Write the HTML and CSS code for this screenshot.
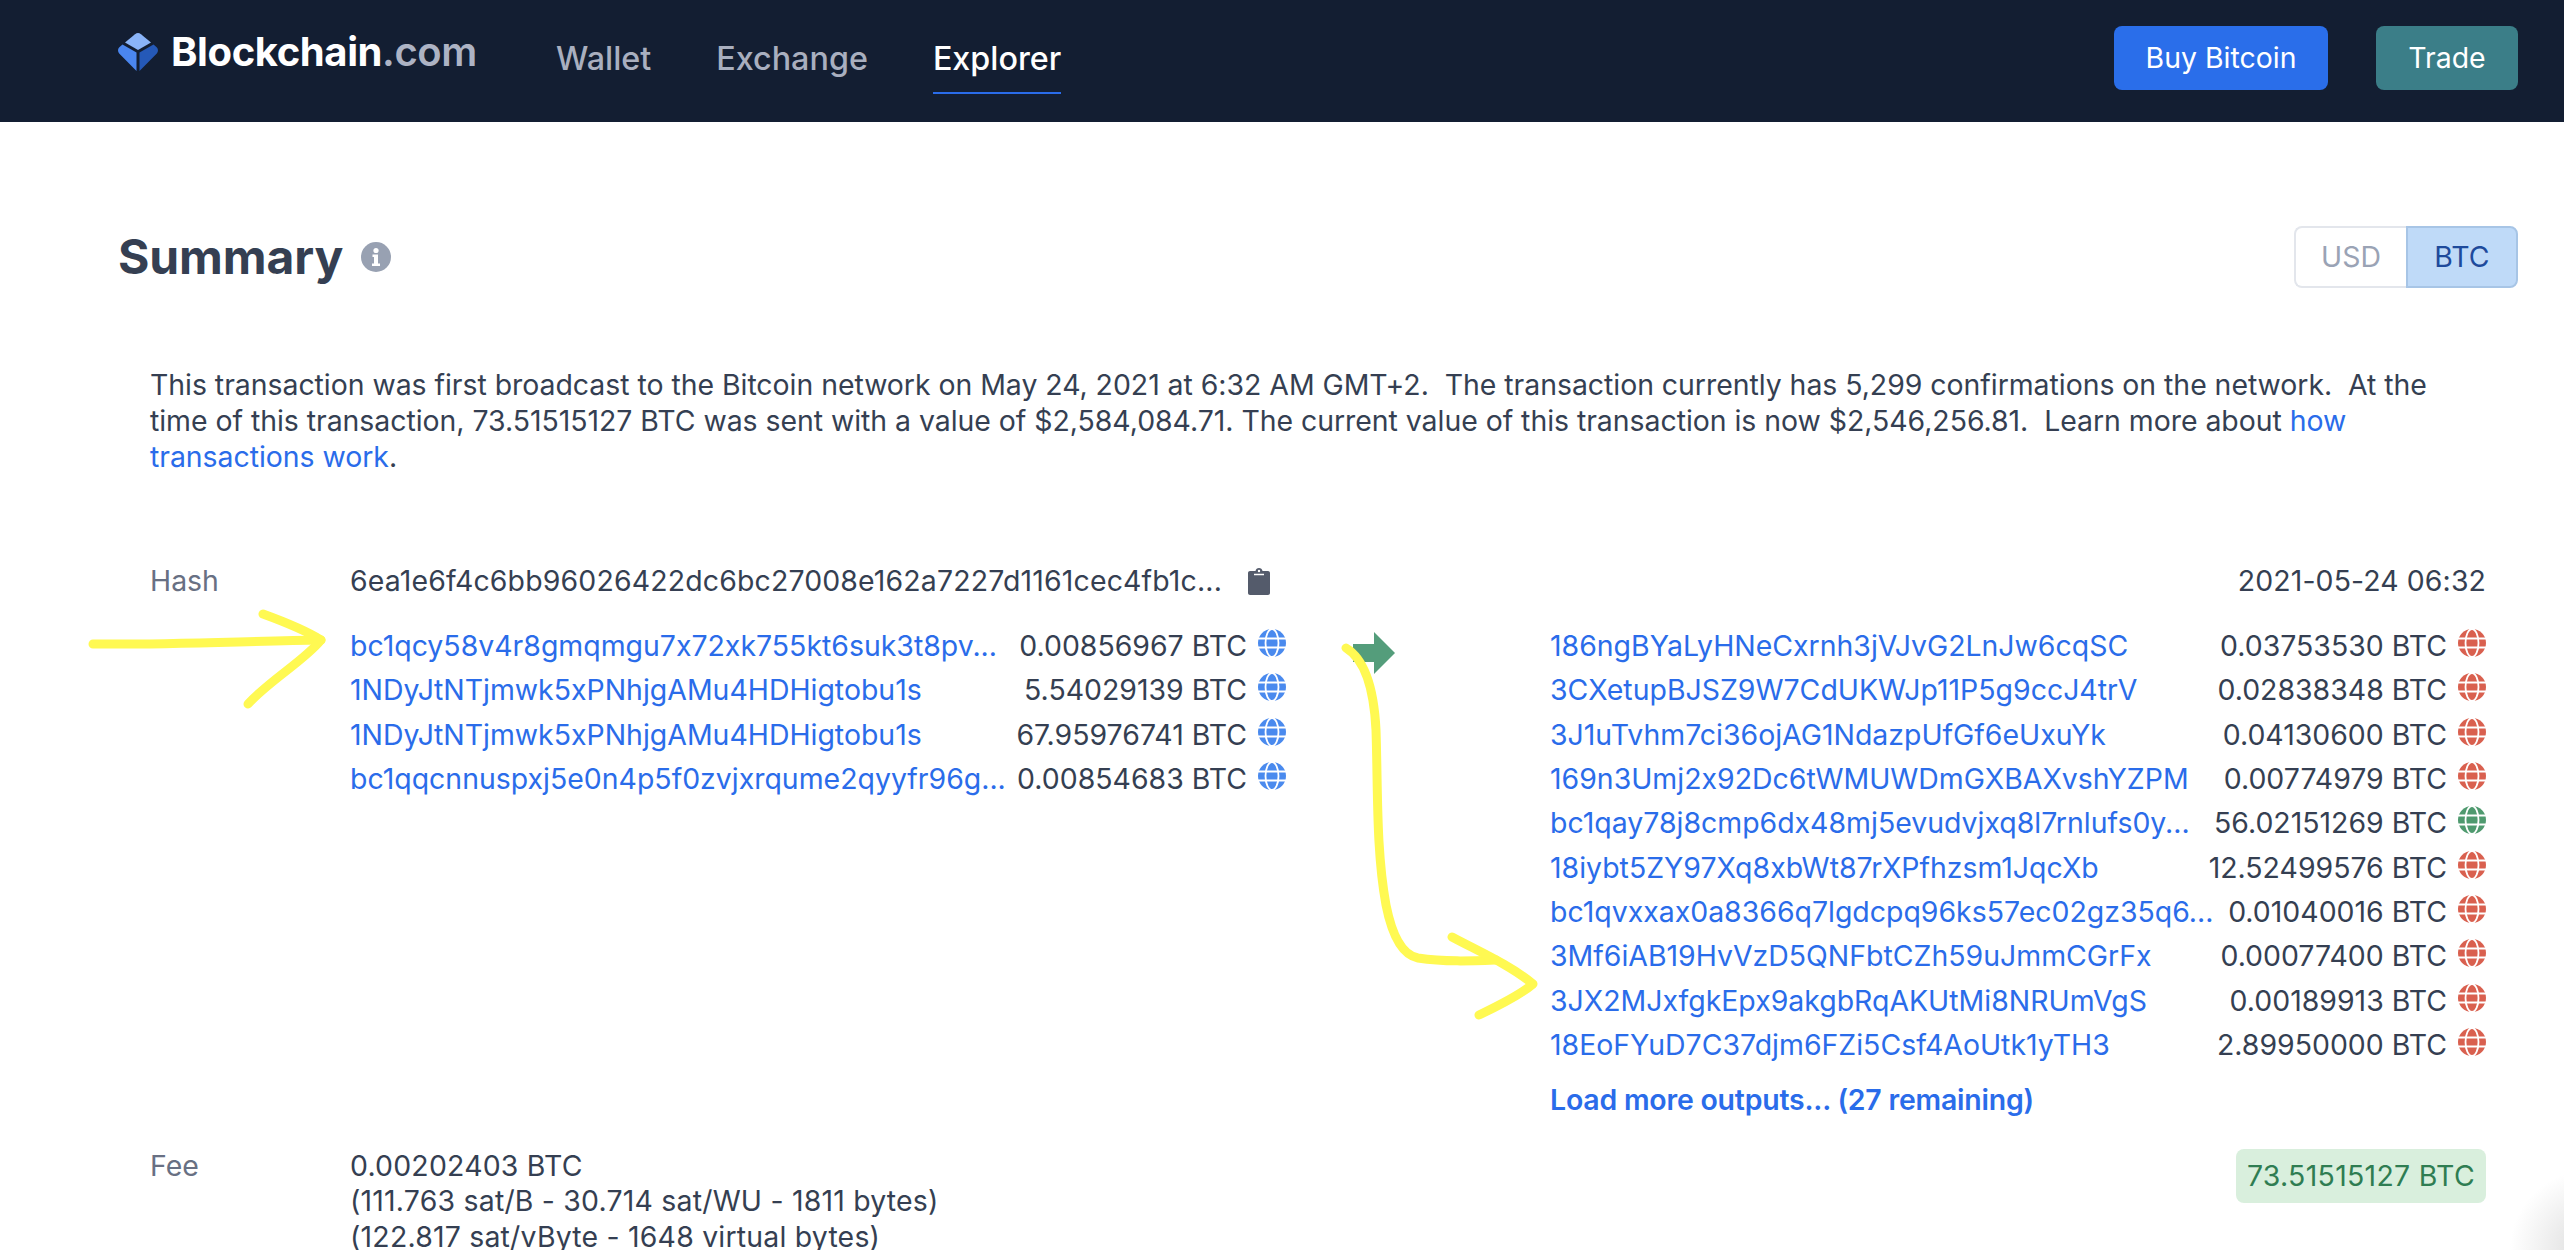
FILE: index.html
```html
<!DOCTYPE html>
<html lang="en">
<head>
    <meta charset="UTF-8">
    <meta name="viewport" content="width=device-width, initial-scale=1.0">
    <title>Blockchain.com Explorer</title>
    <link rel="stylesheet" href="styles.css">
</head>
<body>

    <svg class="defs" width="0" height="0">
        <symbol id="globe" viewBox="0 0 28 28">
            <circle cx="14" cy="14" r="14" fill="currentColor"/>
            <g fill="none" stroke="#fff" stroke-width="1.8">
                <ellipse cx="14" cy="14" rx="6.5" ry="14"/>
                <path d="M0 9.500h28M0 18.500h28"/>
            </g>
        </symbol>
    </svg>

    <header class="topbar">
        <a class="logo" href="#">
            <svg class="logo-mark" viewBox="0 0 40 38" width="40" height="38">
                <path d="M20 0c1 0 2 .4 3 1.2l10 8.4L20 17 7 9.6 17 1.2C18 .4 19 0 20 0z" fill="#8ab4f8"/>
                <path d="M4.500 11.500 18.500 19.500V38L1.200 20.500C-.6 18.600-.2 15.500 1.600 14z" fill="#4a86ef"/>
                <path d="M35.500 11.500 21.500 19.500V38L38.800 20.500C40.600 18.600 40.200 15.500 38.400 14z" fill="#2559b8"/>
            </svg>
            <span class="logo-text">Blockchain<span class="logo-tld">.com</span></span>
        </a>
        <nav class="nav">
            <a href="#">Wallet</a>
            <a href="#">Exchange</a>
            <a href="#" class="active">Explorer</a>
        </nav>
        <div class="topbar-actions">
            <a class="btn btn-buy" href="#">Buy Bitcoin</a>
            <a class="btn btn-trade" href="#">Trade</a>
        </div>
    </header>

    <main class="content">
        <div class="summary-head">
            <h1>Summary</h1>
            <svg class="info" viewBox="0 0 30 30" width="30" height="30">
                <circle cx="15" cy="15" r="15" fill="#98a1b2"/>
                <circle cx="15" cy="8.500" r="2.600" fill="#fff"/>
                <path d="M11.500 12.500h5.500v9h2v2.500h-8v-2.500h2v-6.500h-1.500z" fill="#fff"/>
            </svg>
            <div class="toggle">
                <span class="toggle-off">USD</span>
                <span class="toggle-on">BTC</span>
            </div>
        </div>

        <p class="intro">This transaction was first broadcast to the Bitcoin network on May 24, 2021 at 6:32 AM GMT+2.&nbsp; The transaction currently has 5,299 confirmations on the network.&nbsp; At the time of this transaction, 73.51515127 BTC was sent with a value of $2,584,084.71. The current value of this transaction is now $2,546,256.81.&nbsp; Learn more about <a href="#">how transactions work</a>.</p>

        <div class="tx">
            <div class="tx-hash">
                <span class="tx-label">Hash</span>
                <span class="hash-value">6ea1e6f4c6bb96026422dc6bc27008e162a7227d1161cec4fb1c...</span>
                <svg class="clip" viewBox="0 0 22 27" width="22" height="27">
                    <path d="M2 3h5.500C7.800 1.300 9.200 0 11 0s3.200 1.300 3.500 3H20c1.100 0 2 .9 2 2v20c0 1.100-.9 2-2 2H2c-1.100 0-2-.9-2-2V5c0-1.100.9-2 2-2z" fill="#545b6b"/>
                    <path d="M6 6.500h10" stroke="#fff" stroke-width="1.500"/>
                    <circle cx="11" cy="3" r="1.200" fill="#fff"/>
                </svg>
                <span class="tx-date">2021-05-24 06:32</span>
            </div>

            <div class="tx-flow">
                <div class="inputs">
                    <div class="io-row"><a class="addr" href="#">bc1qcy58v4r8gmqmgu7x72xk755kt6suk3t8pv...</a><span class="amount">0.00856967 BTC</span><svg class="globe spent-in"><use href="#globe"/></svg></div>
                    <div class="io-row"><a class="addr" href="#">1NDyJtNTjmwk5xPNhjgAMu4HDHigtobu1s</a><span class="amount">5.54029139 BTC</span><svg class="globe spent-in"><use href="#globe"/></svg></div>
                    <div class="io-row"><a class="addr" href="#">1NDyJtNTjmwk5xPNhjgAMu4HDHigtobu1s</a><span class="amount">67.95976741 BTC</span><svg class="globe spent-in"><use href="#globe"/></svg></div>
                    <div class="io-row"><a class="addr" href="#">bc1qqcnnuspxj5e0n4p5f0zvjxrqume2qyyfr96g...</a><span class="amount">0.00854683 BTC</span><svg class="globe spent-in"><use href="#globe"/></svg></div>
                </div>

                <svg class="flow-arrow" viewBox="0 0 42 42" width="42" height="42">
                    <path d="M0 12h21V0l21 21-21 21V30H0z" fill="#549d7b"/>
                </svg>

                <div class="outputs">
                    <div class="io-row"><a class="addr" href="#">186ngBYaLyHNeCxrnh3jVJvG2LnJw6cqSC</a><span class="amount">0.03753530 BTC</span><svg class="globe spent"><use href="#globe"/></svg></div>
                    <div class="io-row"><a class="addr" href="#">3CXetupBJSZ9W7CdUKWJp11P5g9ccJ4trV</a><span class="amount">0.02838348 BTC</span><svg class="globe spent"><use href="#globe"/></svg></div>
                    <div class="io-row"><a class="addr" href="#">3J1uTvhm7ci36ojAG1NdazpUfGf6eUxuYk</a><span class="amount">0.04130600 BTC</span><svg class="globe spent"><use href="#globe"/></svg></div>
                    <div class="io-row"><a class="addr" href="#">169n3Umj2x92Dc6tWMUWDmGXBAXvshYZPM</a><span class="amount">0.00774979 BTC</span><svg class="globe spent"><use href="#globe"/></svg></div>
                    <div class="io-row"><a class="addr" href="#">bc1qay78j8cmp6dx48mj5evudvjxq8l7rnlufs0y...</a><span class="amount">56.02151269 BTC</span><svg class="globe unspent"><use href="#globe"/></svg></div>
                    <div class="io-row"><a class="addr" href="#">18iybt5ZY97Xq8xbWt87rXPfhzsm1JqcXb</a><span class="amount">12.52499576 BTC</span><svg class="globe spent"><use href="#globe"/></svg></div>
                    <div class="io-row"><a class="addr" href="#">bc1qvxxax0a8366q7lgdcpq96ks57ec02gz35q6...</a><span class="amount">0.01040016 BTC</span><svg class="globe spent"><use href="#globe"/></svg></div>
                    <div class="io-row"><a class="addr" href="#">3Mf6iAB19HvVzD5QNFbtCZh59uJmmCGrFx</a><span class="amount">0.00077400 BTC</span><svg class="globe spent"><use href="#globe"/></svg></div>
                    <div class="io-row"><a class="addr" href="#">3JX2MJxfgkEpx9akgbRqAKUtMi8NRUmVgS</a><span class="amount">0.00189913 BTC</span><svg class="globe spent"><use href="#globe"/></svg></div>
                    <div class="io-row"><a class="addr" href="#">18EoFYuD7C37djm6FZi5Csf4AoUtk1yTH3</a><span class="amount">2.89950000 BTC</span><svg class="globe spent"><use href="#globe"/></svg></div>
                    <a class="load-more" href="#">Load more outputs... (27 remaining)</a>
                </div>
            </div>

            <div class="tx-fee">
                <span class="tx-label">Fee</span>
                <div class="fee-value">
                    0.00202403 BTC<br>
                    (111.763 sat/B - 30.714 sat/WU - 1811 bytes)<br>
                    (122.817 sat/vByte - 1648 virtual bytes)
                </div>
                <span class="total">73.51515127 BTC</span>
            </div>
        </div>
    </main>

    <!-- hand drawn marks on top of the screenshot -->
    <svg class="marks" viewBox="0 0 2564 1250" width="2564" height="1250">
        <defs>
            <radialGradient id="corner" gradientUnits="userSpaceOnUse" cx="2590" cy="1250" r="80">
                <stop offset="0" stop-color="#dcdcdc"/>
                <stop offset="1" stop-color="#dcdcdc" stop-opacity="0"/>
            </radialGradient>
        </defs>
        <rect x="2500" y="1160" width="64" height="90" fill="url(#corner)"/>
        <g fill="none" stroke="#fff952" stroke-width="9" stroke-linecap="round" stroke-linejoin="round">
            <path d="M93 644C160 645 250 641 321 640"/>
            <path d="M263 614C285 622 305 630 321 640C305 660 270 680 248 704"/>
            <path d="M1346 648C1366 660 1374 690 1376 730C1378 790 1376 850 1386 905C1392 935 1402 955 1418 958C1445 962 1470 961 1496 960"/>
            <path d="M1452 937C1480 952 1510 965 1533 984C1520 995 1500 1005 1479 1015"/>
        </g>
    </svg>

</body>
</html>
```

FILE: styles.css
```css
* {
    box-sizing: border-box;
}

body {
    position: relative;
    margin: 0;
    height: 1250px;
    overflow: hidden;
    font-family: Inter, "Liberation Sans", sans-serif;
    font-size: 28.44px;
    line-height: 36px;
    font-feature-settings: "calt" 0;
    color: #353f52;
    background-color: #fff;
}

a {
    color: #2a6cea;
    text-decoration: none;
}

.defs {
    position: absolute;
}

/* top bar */
.topbar {
    display: flex;
    align-items: center;
    height: 122px;
    padding: 0 46px 0 118px;
    background-color: #131e32;
}

.logo {
    display: flex;
    align-items: center;
    gap: 13px;
    width: 438px;
    margin-top: -18px;
    color: #fff;
}

.logo-text {
    font-size: 40px;
    font-weight: 700;
    letter-spacing: -0.4px;
}

.logo-tld {
    color: #adb3c4;
    font-weight: 600;
}

.nav {
    display: flex;
    gap: 65px;
    height: 122px;
    padding-top: 41px;
}

.nav a {
    height: 53px;
    font-size: 32.3px;
    font-weight: 500;
    color: #a9afbf;
}

.nav a.active {
    color: #fff;
    border-bottom: 2px solid #2a6cea;
}

.topbar-actions {
    display: flex;
    gap: 48px;
    margin-top: -6px;
    margin-left: auto;
}

.btn {
    display: flex;
    align-items: center;
    justify-content: center;
    height: 64px;
    border-radius: 8px;
    color: #fff;
}

.btn-buy {
    width: 214px;
    background-color: #2a6eea;
}

.btn-trade {
    width: 142px;
    background-color: #3b7e88;
}

/* page */
.content {
    padding: 0 46px 0 118px;
}

.summary-head {
    display: flex;
    align-items: center;
    margin-top: 104px;
    height: 62px;
}

h1 {
    margin: 0 18px 0 0;
    font-size: 48px;
    font-weight: 700;
    line-height: 62px;
    letter-spacing: -0.1px;
}

.toggle {
    display: flex;
    margin-left: auto;
    height: 62px;
}

.toggle span {
    display: flex;
    align-items: center;
    justify-content: center;
    width: 112px;
    border: 2px solid #e3e6ec;
}

.toggle-off {
    color: #9aa3b5;
    border-right: 0 !important;
    border-radius: 8px 0 0 8px;
}

.toggle-on {
    color: #1e4a9c;
    background-color: #bfdaf8;
    border-color: #a7c5e6 !important;
    border-radius: 0 8px 8px 0;
}

.intro {
    margin: 79px 32px 0;
    letter-spacing: -0.04px;
}

.tx {
    margin: 88px 32px 0;
}

.tx-hash {
    display: flex;
    align-items: center;
    height: 36px;
}

.tx-label {
    flex: none;
    width: 200px;
    color: #687083;
}

.hash-value {
    letter-spacing: 0.15px;
}

.clip {
    margin-left: 26px;
}

.tx-date {
    margin-left: auto;
    letter-spacing: 0.1px;
}

.tx-flow {
    display: flex;
    margin-top: 25px;
    align-items: flex-start;
}

.inputs {
    flex: none;
    width: 936px;
    margin-left: 200px;
}

.flow-arrow {
    flex: none;
    margin: 8px 155px 0 67px;
}

.outputs {
    flex: 1;
    min-width: 0;
}

.io-row {
    display: flex;
    align-items: center;
    height: 44.3px;
}

.addr {
    flex: none;
    white-space: nowrap;
}

.amount {
    flex: 1;
    text-align: right;
    white-space: nowrap;
}

.globe {
    flex: none;
    width: 28px;
    height: 28px;
    margin: -6px 0 0 11px;
}

.spent-in {
    color: #4a8aee;
}

.spent {
    color: #d9604f;
}

.unspent {
    color: #4f9a6f;
}

.load-more {
    display: block;
    margin-top: 15px;
    font-weight: 600;
    letter-spacing: -0.2px;
}

.tx-fee {
    display: flex;
    align-items: flex-start;
    margin-top: 30px;
}

.fee-value {
    line-height: 35.5px;
    letter-spacing: 0.2px;
}

.total {
    margin: 1px 0 0 auto;
    padding: 9px 11px;
    border-radius: 8px;
    color: #2f7d52;
    background-color: #d9efdd;
    letter-spacing: 0.3px;
}

/* marks over the page */
.marks {
    position: absolute;
    top: 0;
    left: 0;
}
```
